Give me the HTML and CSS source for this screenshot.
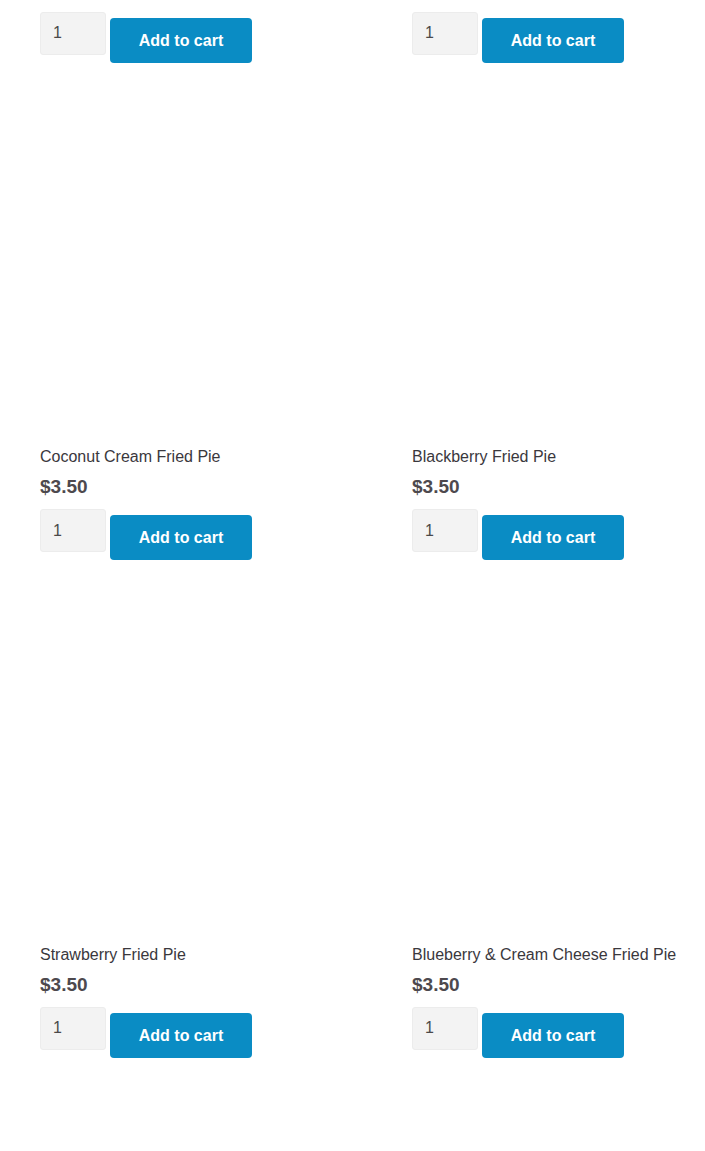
FILE: index.html
```html
<!DOCTYPE html>
<html lang="en">
<head>
<meta charset="utf-8">
<title>Fried Pies</title>
<link rel="stylesheet" href="styles.css">
</head>
<body>
<main class="page">
  <ul class="products">
    <li class="product">
      <div class="thumb"></div>
      <h2 class="title">Apple Fried Pie</h2>
      <div class="price">$3.50</div>
      <form class="cart"><input class="qty" type="number" value="1"><button class="btn" type="button">Add to cart</button></form>
    </li>
    <li class="product">
      <div class="thumb"></div>
      <h2 class="title">Peach Fried Pie</h2>
      <div class="price">$3.50</div>
      <form class="cart"><input class="qty" type="number" value="1"><button class="btn" type="button">Add to cart</button></form>
    </li>
    <li class="product">
      <div class="thumb"></div>
      <h2 class="title">Coconut Cream Fried Pie</h2>
      <div class="price">$3.50</div>
      <form class="cart"><input class="qty" type="number" value="1"><button class="btn" type="button">Add to cart</button></form>
    </li>
    <li class="product">
      <div class="thumb"></div>
      <h2 class="title">Blackberry Fried Pie</h2>
      <div class="price">$3.50</div>
      <form class="cart"><input class="qty" type="number" value="1"><button class="btn" type="button">Add to cart</button></form>
    </li>
    <li class="product">
      <div class="thumb"></div>
      <h2 class="title">Strawberry Fried Pie</h2>
      <div class="price">$3.50</div>
      <form class="cart"><input class="qty" type="number" value="1"><button class="btn" type="button">Add to cart</button></form>
    </li>
    <li class="product">
      <div class="thumb"></div>
      <h2 class="title">Blueberry &amp; Cream Cheese Fried Pie</h2>
      <div class="price">$3.50</div>
      <form class="cart"><input class="qty" type="number" value="1"><button class="btn" type="button">Add to cart</button></form>
    </li>
  </ul>
</main>
</body>
</html>
```
FILE: styles.css
```css
html, body {
  margin: 0;
  padding: 0;
  background: #ffffff;
  font-family: "Liberation Sans", Arial, sans-serif;
  overflow: hidden;
}

.page {
  padding-left: 40px;
}

.products {
  list-style: none;
  margin: -435px 0 0 0;
  padding: 0;
  display: grid;
  grid-template-columns: 342px 1fr;
  column-gap: 30px;
}

.product {
  display: flex;
  flex-direction: column;
  align-items: flex-start;
}

.thumb {
  width: 100%;
  height: 381.5px;
}

.title {
  margin: 1px 0 0 0;
  font-size: 16px;
  line-height: 24px;
  font-weight: 400;
  color: #3a383d;
  white-space: nowrap;
}

.price {
  margin-top: 5px;
  font-size: 19px;
  line-height: 26px;
  font-weight: 700;
  color: #4d494e;
}

.cart {
  margin: 9px 0 0 0;
  display: flex;
  align-items: flex-start;
  gap: 4px;
}

.qty {
  box-sizing: border-box;
  width: 66px;
  height: 43px;
  margin: 0;
  padding: 0 0 0 12px;
  border: 1px solid #ececec;
  border-radius: 3px;
  background: #f3f3f3;
  font-family: "Liberation Sans", Arial, sans-serif;
  font-size: 16px;
  color: #4a4a4a;
  -moz-appearance: textfield;
  appearance: textfield;
}

.qty::-webkit-inner-spin-button,
.qty::-webkit-outer-spin-button {
  -webkit-appearance: none;
  margin: 0;
}

.btn {
  margin-top: 6px;
  width: 142px;
  height: 45px;
  padding: 0;
  border: none;
  border-radius: 4px;
  background: #0a8cc4;
  color: #ffffff;
  font-family: "Liberation Sans", Arial, sans-serif;
  font-size: 16px;
  font-weight: 700;
  line-height: 45px;
  cursor: pointer;
}
```
